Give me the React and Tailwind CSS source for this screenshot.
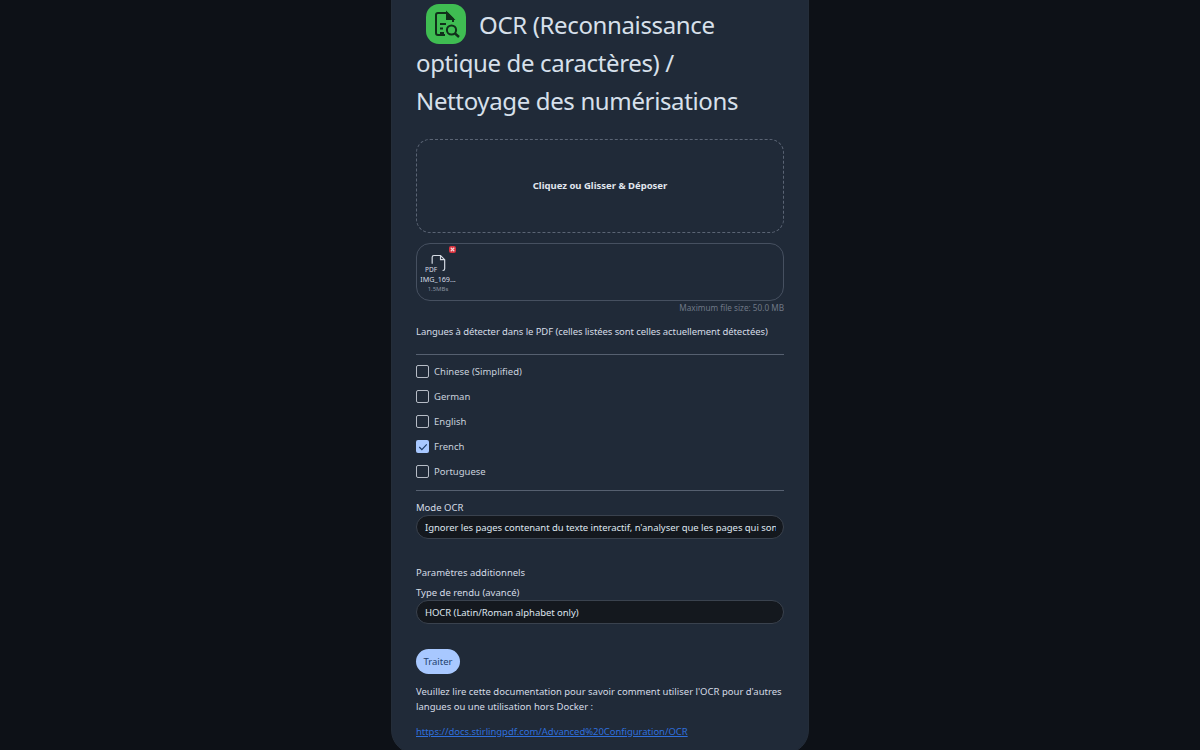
import React from "react";

const FONT = { fontFamily: '"Noto Sans", "Liberation Sans", sans-serif' };

const languages = [
  { name: "Chinese (Simplified)", checked: false },
  { name: "German", checked: false },
  { name: "English", checked: false },
  { name: "French", checked: true },
  { name: "Portuguese", checked: false },
];

const OcrIcon = () => (
  <svg viewBox="0 0 40 40" className="w-[40px] h-[40px]" fill="none" stroke="#10301a" strokeWidth="2">
    <path d="M27 18v-3l-6-6h-9a2 2 0 0 0-2 2v18a2 2 0 0 0 2 2h7" />
    <path d="M21 9v6h6z" fill="#10301a" />
    <path d="M14 20h6M14 24.5h3M14 29h4" />
    <circle cx="25.5" cy="26" r="4.6" />
    <path d="m29 29.5 4 3.5" strokeWidth="2.4" />
  </svg>
);

const FileIcon = () => (
  <svg viewBox="0 0 24 24" className="w-[20px] h-[20px]" fill="none" stroke="#d5dbe4" strokeWidth="1.4">
    <path d="M5 13V5a2 2 0 0 1 2-2h8l5 5v11a2 2 0 0 1-2 2h-.5" />
    <path d="M15 3v5h5" />
  </svg>
);

const Check = ({ checked }) =>
  checked ? (
    <span className="w-[13px] h-[13px] rounded-[2px] bg-[#a8c8ff] flex items-center justify-center">
      <svg viewBox="0 0 16 16" className="w-[12px] h-[12px]" fill="none" stroke="#1b3a66" strokeWidth="1.5">
        <path d="m3 8 3.5 3.5L13 4.5" />
      </svg>
    </span>
  ) : (
    <span className="w-[13px] h-[13px] rounded-[2px] border border-[#b6bcc6]" />
  );

const SelectBox = ({ children }) => (
  <div className="h-[24px] rounded-full bg-[#14181e] border border-[#3a424e] pl-[8px] pr-[7px] flex items-center text-[9.5px] tracking-[-0.05px] text-[#dfe5ee] whitespace-nowrap">
    <span className="block min-w-0 overflow-hidden pt-[2px]">{children}</span>
  </div>
);

export default function App() {
  return (
    <div className="w-[1200px] h-[750px] overflow-hidden bg-[#0d1117]" style={FONT}>
      <div className="w-[418px] h-[784px] mx-auto -mt-[30px] rounded-[24px] bg-[#202a38] border border-[#242d39] px-[24px] pt-[30px]">
        <h1 className="text-[24px] leading-[38px] text-[#d7e0eb] pt-[5px] tracking-[-0.36px]">
          <span className="inline-block align-middle w-[40px] h-[40px] ml-[10px] mr-[13px] -mt-[8px] mb-0 rounded-[13px] bg-[#3fbd52]">
            <OcrIcon />
          </span>
          OCR (Reconnaissance optique de caractères) / Nettoyage des numérisations
        </h1>

        <div className="mt-[19px] h-[94px] rounded-[14px] border border-dashed border-[#5a6474] flex items-center justify-center text-[9.5px] font-bold text-[#e0e6ee]">
          Cliquez ou Glisser &amp; Déposer
        </div>

        <div className="mt-[10px] h-[58px] rounded-[14px] border border-[#465060] relative">
          <div className="w-[40px] ml-[1px] flex flex-col items-center pt-[9px]">
            <div className="relative h-[20px]">
              <FileIcon />
              <span className="absolute left-[-3px] top-[13px] text-[6.5px] leading-[8px] text-[#d5dbe4]">PDF</span>
            </div>
            <span className="text-[7.2px] leading-[9px] text-[#d5dbe4] mt-[2px] whitespace-nowrap">IMG_169...</span>
            <span className="text-[6px] leading-[8px] text-[#8b93a0] mt-[1px]">1.5MBs</span>
          </div>
          <span className="absolute left-[32px] top-[2px] w-[7px] h-[7px] rounded-[2px] bg-[#d8333f] flex items-center justify-center">
            <svg viewBox="0 0 8 8" className="w-[7px] h-[7px]" stroke="#f7d6d8" strokeWidth="1.3">
              <path d="m2 2 4 4M6 2 2 6" />
            </svg>
          </span>
        </div>
        <div className="text-right text-[8.2px] leading-[12px] mt-[1px] text-[#6f7886]">Maximum file size: 50.0 MB</div>

        <div className="mt-[11px] text-[9.5px] leading-[14px] text-[#d5dce6] tracking-[-0.09px] whitespace-nowrap">
          Langues à détecter dans le PDF (celles listées sont celles actuellement détectées)
        </div>
        <div className="mt-[15px] border-t border-[#566070]" />

        <div className="flex flex-col gap-[12px] pt-[10px] pb-[12px]">
          {languages.map((lang) => (
            <label key={lang.name} className="flex items-center gap-[5px] h-[13px] text-[9.5px] text-[#c9d1dc]">
              <Check checked={lang.checked} />
              <span className="pt-[2px]">{lang.name}</span>
            </label>
          ))}
        </div>
        <div className="border-t border-[#566070]" />

        <div className="mt-[10px] text-[9.5px] leading-[14px] text-[#d5dce6]">Mode OCR</div>
        <SelectBox>Ignorer les pages contenant du texte interactif, n'analyser que les pages qui sont des images</SelectBox>

        <div className="mt-[27px] text-[9.5px] leading-[14px] text-[#d5dce6]">Paramètres additionnels</div>
        <div className="mt-[6px] text-[9.5px] leading-[14px] text-[#d5dce6]">Type de rendu (avancé)</div>
        <SelectBox>HOCR (Latin/Roman alphabet only)</SelectBox>

        <button className="block mt-[25px] h-[25px] w-[44px] pt-[2px] rounded-full bg-[#a8c8ff] text-[9.5px] text-[#1f3f6e]">Traiter</button>

        <p className="mt-[10px] text-[9.5px] leading-[15px] text-[#d5dce6]">
          Veuillez lire cette documentation pour savoir comment utiliser l'OCR pour d'autres langues ou une utilisation hors Docker :
        </p>
        <a className="block mt-[10px] text-[9.5px] leading-[15px] tracking-[-0.04px] text-[#2f6fdc] underline">
          https://docs.stirlingpdf.com/Advanced%20Configuration/OCR
        </a>
      </div>
    </div>
  );
}
